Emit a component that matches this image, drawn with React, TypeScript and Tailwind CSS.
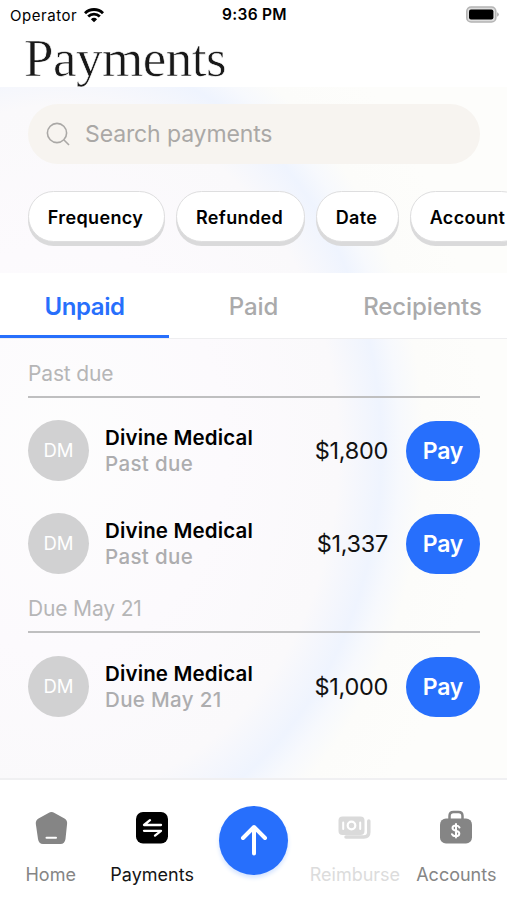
import type { ReactNode } from "react";

const filters = [
  { label: "Frequency", width: "w-[137px]" },
  { label: "Refunded", width: "w-[129px]" },
  { label: "Date", width: "w-[83px]" },
  { label: "Account", width: "w-[117px]" },
];

function StatusBar() {
  return (
    <div className="flex h-[30px] items-center justify-between pl-[10px] pr-[8px] text-[15px] leading-none">
      <div className="flex flex-1 items-center gap-[7px]">
        <span className="tracking-[0.55px]">Operator</span>
        <svg width="20" height="15" viewBox="0 0 20 15" fill="none" stroke="#000" strokeWidth="2.900">
          <path d="M1 5.200C6 .3 14 .3 19 5.200M4.200 8.500C7.500 5.300 12.500 5.300 15.800 8.500" />
          <path d="M10 14.200 6.900 11.200Q10 8.500 13.100 11.200Z" fill="#000" stroke="none" />
        </svg>
      </div>
      <span className="text-[15.5px] font-semibold tracking-[0.3px]">9:36 PM</span>
      <div className="flex flex-1 justify-end">
        <svg width="34" height="18" viewBox="0 0 34 18">
          <rect x="1.800" y="1" width="29" height="15" rx="4.300" fill="#ddd" stroke="#b4b4b4" strokeWidth="1.600" />
          <rect x="4" y="3.500" width="24.400" height="10" rx="2" fill="#000" />
          <path d="M32.200 6.300q1.600.8 1.600 2.200t-1.600 2.200z" fill="#a9a9a9" />
        </svg>
      </div>
    </div>
  );
}

function Section({ title, children, className }: { title: string; children: ReactNode; className: string }) {
  return (
    <section className={className}>
      <h2 className="h-[37px] border-b-2 border-[#bfbfc0] text-[21px] leading-[25px] tracking-[-0.15px] text-[#b6b6b7]">{title}</h2>
      {children}
    </section>
  );
}

function PaymentRow({ due, amount }: { due: string; amount: string }) {
  return (
    <div className="flex h-[61px] items-center">
      <div className="flex size-[61px] items-center justify-center rounded-full bg-[#d1d1d2] text-[18.5px] text-white">DM</div>
      <div className="ml-[16px] flex-1 pt-px text-[20.5px] leading-[26px]">
        <div className="font-semibold tracking-[0.15px] text-black">Divine Medical</div>
        <div className="font-medium tracking-[0.35px] text-[#adadaf]">{due}</div>
      </div>
      <div className="text-[23.5px] tracking-[-0.3px] text-[#111]">{amount}</div>
      <button className="ml-[18px] h-[60px] w-[74px] rounded-full bg-[#276ffc] pt-px text-[23px] font-semibold tracking-[-0.2px] text-white">Pay</button>
    </div>
  );
}

function NavItem({ label, className, children }: { label: string; className: string; children: ReactNode }) {
  return (
    <div className={`flex flex-1 flex-col items-center pt-[30px] text-[18px] leading-[24px] ${className}`}>
      <svg width="38" height="38" viewBox="0 0 38 38" fill="none">{children}</svg>
      <span className="mt-[15px]">{label}</span>
    </div>
  );
}

export default function App() {
  return (
    <div className="flex h-[900px] w-[507px] flex-col overflow-hidden bg-[#fdfdfb] bg-[radial-gradient(ellipse_328px_405px_at_60px_450px,#fdfdfd_0%,#fcfafd_50%,#faf9fb_85%,#eff4fe_98%,#f7f9fd_104%,#fcfcfa_111%,#fdfdfb_130%)] font-['Inter',sans-serif] text-black">
      <header className="h-[87px] shrink-0 bg-white">
        <StatusBar />
        <h1 className="pl-[24px] font-['Liberation_Serif',serif] text-[53px] leading-[56px] tracking-[-0.5px] text-[#191919] [-webkit-text-stroke:0.6px_white]">Payments</h1>
      </header>

      <div className="h-[186px] shrink-0 pl-[28px] pt-[17px]">
        <div className="flex h-[60px] w-[452px] items-center rounded-full bg-[#f7f4f0] pl-[18px] text-[23px] text-[#aaa8a6]">
          <svg width="24" height="24" viewBox="0 0 24 24" fill="none" stroke="#aaa8a6" strokeWidth="1.600">
            <circle cx="11" cy="11" r="9.600" />
            <path d="m18 18 5 5" />
          </svg>
          <span className="ml-[15px] tracking-[-0.12px]">Search payments</span>
        </div>
        <div className="mt-[27px] flex gap-[11px]">
          {filters.map(({ label, width }) => (
            <button key={label} className={`h-[51px] shrink-0 rounded-full border border-[#dededf] bg-white pr-[2px] pt-[2px] text-[18px] font-semibold tracking-[0.36px] shadow-[0_4px_0_#dadadb] ${width}`}>
              {label}
            </button>
          ))}
        </div>
      </div>

      <nav className="grid h-[66px] shrink-0 grid-cols-3 border-b border-[#eeeef0] bg-white text-center text-[24px] font-medium leading-[67px] tracking-[-0.1px] text-[#aaaaab]">
        <div className="h-[65px] border-b-3 border-[#276ffc] font-semibold tracking-[-0.4px] text-[#276ffc]">Unpaid</div>
        <div>Paid</div>
        <div>Recipients</div>
      </nav>

      <main className="h-[439px] shrink-0 pl-[28px] pr-[27px]">
        <Section title="Past due" className="pt-[22px]">
          <div className="mt-[22px] flex flex-col gap-[32px]">
            <PaymentRow due="Past due" amount="$1,800" />
            <PaymentRow due="Past due" amount="$1,337" />
          </div>
        </Section>
        <Section title="Due May 21" className="pt-[22px]">
          <div className="mt-[23px]">
            <PaymentRow due="Due May 21" amount="$1,000" />
          </div>
        </Section>
      </main>

      <footer className="flex flex-1 border-t-2 border-[#f0f0f2] bg-white">
        <NavItem label="Home" className="text-[#858585]">
          <path d="M16.500 3q3-2 6 0l10 5.500q3 2 2.600 5.200L33.500 29q-.8 5-5 5H11q-4.200 0-5-5L3.800 13.700Q3.500 10.500 6.500 8.500Z" fill="#858585" />
          <path d="M14.500 27.800h9.500" stroke="#fff" strokeWidth="2" strokeLinecap="round" />
        </NavItem>
        <NavItem label="Payments" className="text-[#151515]">
          <rect x="3" y="2" width="32" height="31.500" rx="7" fill="#000" />
          <path d="M28 15H11l6-4.800M11 20.800h17l-6 4.800" stroke="#fff" strokeWidth="2.300" strokeLinecap="round" strokeLinejoin="round" />
        </NavItem>
        <div className="flex flex-1 justify-center pt-[26px]">
          <button className="flex size-[69px] shrink-0 items-center justify-center rounded-full bg-[#276ffc] pb-[2px] shadow-[0_3px_4px_#d5e4ff]">
            <svg width="30" height="34" viewBox="0 0 30 34" fill="none" stroke="#fff" strokeWidth="4" strokeLinecap="round" strokeLinejoin="round">
              <path d="M15 30.500V4M4 15 15 4l11 11" />
            </svg>
          </button>
        </div>
        <NavItem label="Reimburse" className="text-[#dcdcdc]">
          <path d="M32.800 11v11q0 5-5 5H10" stroke="#dadada" strokeWidth="3.500" strokeLinecap="round" />
          <rect x="2.500" y="6.500" width="26" height="18.500" rx="4" fill="#dadada" />
          <circle cx="15.500" cy="15.500" r="3.800" stroke="#fff" strokeWidth="2.200" />
          <path d="M7.200 12.500v6.500M24.200 12.500v6.500" stroke="#fff" strokeWidth="2" strokeLinecap="round" />
        </NavItem>
        <NavItem label="Accounts" className="text-[#858585]">
          <path d="M12.500 11V6q0-4 4-4h5q4 0 4 4v5" stroke="#858585" strokeWidth="2.500" />
          <rect x="3" y="8.500" width="32" height="25" rx="6" fill="#858585" />
          <path d="M22.500 17.500q-1-2-3.700-2-3.300 0-3.300 2.500 0 2 3.300 2.700t3.500 2.700q0 2.800-3.500 2.800-2.800 0-3.800-2M19 14v13.500" stroke="#fff" strokeWidth="2" strokeLinecap="round" />
        </NavItem>
      </footer>
    </div>
  );
}
